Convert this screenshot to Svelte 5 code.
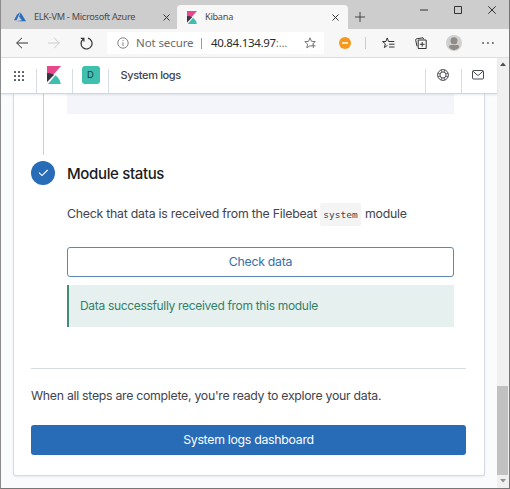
<script>
  const dots = [0, 1, 2, 3, 4, 5, 6, 7, 8];
</script>

{#snippet kibana(w, h)}
  <svg width={w} height={h} viewBox="0 0 14 18" preserveAspectRatio="none">
    <path d="M0 0H14L0 16Z" fill="#e8478b" />
    <path d="M0 7Q4 7 7.2 8.8L0 16Z" fill="#343741" />
    <path d="M1 18L8.4 9.2Q13 12.5 13.8 18Z" fill="#3ebeb0" />
  </svg>
{/snippet}

<div class="window">
  <div class="tabs">
    <div class="tab first">
      <svg class="azure" width="12" height="10" viewBox="0 0 12 10">
        <path d="M6.2 0L2.9 2.8L0 8.2H2.6Z" fill="#286dc0" />
        <path d="M6.6 .6L5.1 4.8L7.9 8.2L2.4 9.3H12Z" fill="#286dc0" />
      </svg>
      <span class="tabtitle">ELK-VM - Microsoft Azure</span>
      <svg class="close" width="7" height="7" viewBox="0 0 7 7"><path d="M.5 .5L6.5 6.5M6.5 .5L.5 6.5" /></svg>
    </div>
    <div class="tab active">
      {@render kibana(10, 13)}
      <span class="tabtitle">Kibana</span>
      <svg class="close" width="7" height="7" viewBox="0 0 7 7"><path d="M.5 .5L6.5 6.5M6.5 .5L.5 6.5" /></svg>
    </div>
    <svg class="plus" width="10" height="10" viewBox="0 0 10 10"><path d="M5 0V10M0 5H10" /></svg>
    <div class="controls">
      <svg width="8" height="10" viewBox="0 0 8 10"><path d="M0 5H8" /></svg>
      <svg width="8" height="10" viewBox="0 0 8 10"><path d="M.5 1.5H7.5V8.5H.5Z" /></svg>
      <svg width="8" height="10" viewBox="0 0 8 10"><path d="M.3 1.3L7.7 8.7M7.7 1.3L.3 8.7" /></svg>
    </div>
  </div>

  <div class="toolbar">
    <svg class="back" width="12" height="12" viewBox="0 0 12 12"><path d="M12 6H.7M6 .8L.7 6L6 11.2" /></svg>
    <svg class="forward" width="12" height="12" viewBox="0 0 12 12"><path d="M0 6H11.3M6 .8L11.3 6L6 11.2" /></svg>
    <svg class="reload" width="13" height="13" viewBox="0 0 13 13"><path d="M8 1.2A5.5 5.5 0 1 1 3.1 2.2M.8 1.3H3.9V4.4" /></svg>
    <div class="address">
      <svg class="info" width="12" height="12" viewBox="0 0 12 12"><circle cx="6" cy="6" r="5.2" /><path d="M6 5.2V9M6 3V4" /></svg>
      <span class="secure">Not secure</span>
      <i class="bar"></i>
      <span class="url">40.84.134.97<em>:...</em></span>
      <svg class="star" width="12" height="12" viewBox="0 0 12 12">
        <path d="M6 .8L7.5 4.3L11.3 4.6L8.4 7.1M7.1 9.3L6 8.7L2.8 10.8L3.6 7.1L.8 4.6L4.6 4.3L6 .8M7 8.8H11.5M9.3 6.6V11" />
      </svg>
    </div>
    <svg class="blocker" width="12" height="12" viewBox="0 0 12 12"><circle cx="6" cy="6" r="6" fill="#f7981d" /><path d="M3 6H9" stroke="#fff" stroke-width="1.5" /></svg>
    <i class="divider"></i>
    <svg class="favs" width="13" height="12" viewBox="0 0 13 12"><path d="M12.3 4.5H6.6L5.2 .9L3.9 4.5H.6L3.3 6.8L2.4 10.5L5.5 8.4M7 7.2H12.5M7 10H12.5" /></svg>
    <svg class="collections" width="12" height="13" viewBox="0 0 12 13"><path d="M3.2 3H11.2V11.5H3.2ZM7.2 5V9.7M4.8 7.3H9.6M2 9.3L.7 3.2Q.5 2 1.7 1.8L8 .8L8.8 2.2" /></svg>
    <svg class="avatar" width="16" height="16" viewBox="0 0 16 16">
      <circle cx="8" cy="8" r="8" fill="#d2d0ce" /><circle cx="8" cy="5.7" r="3.5" fill="#8e8b88" /><path d="M2.8 12Q3.2 10 5 10H11.4Q13.1 10 13.4 12Q11 15.3 8 15.3Q5 15.3 2.8 12Z" fill="#8e8b88" />
    </svg>
    <svg class="more" width="12" height="4" viewBox="0 0 12 4"><path d="M.3 2H1.8M5.2 2H6.7M10.1 2H11.6" /></svg>
  </div>

  <div class="page">
    <div class="view">
      <header>
        <div class="apps">{#each dots as dot (dot)}<i></i>{/each}</div>
        <div class="logo">{@render kibana(14, 18)}</div>
        <div class="space"><span>D</span></div>
        <div class="crumb">System logs</div>
        <div class="action">
          <svg width="12" height="12" viewBox="0 0 12 12"><circle cx="6" cy="6" r="5.4" /><circle cx="6" cy="6" r="3.1" /><path d="M4.2 .9L4.8 3M7.8 .9L7.2 3M4.2 11.1L4.8 9M7.8 11.1L7.2 9M.9 4.2L3 4.8M.9 7.8L3 7.2M11.1 4.2L9 4.8M11.1 7.8L9 7.2" stroke-width=".7" /></svg>
        </div>
        <div class="action mail">
          <svg width="12" height="10" viewBox="0 0 12 10"><rect x=".5" y=".5" width="11" height="8.5" rx="1" /><path d="M1 1.2L5.2 5Q6 5.6 6.8 5L11 1.2" /></svg>
        </div>
      </header>
      <main>
        <section class="panel">
          <div class="step">
            <div class="rail">
              <i></i>
              <span class="circle"><svg width="11" height="8" viewBox="0 0 11 8"><path d="M1 3.7L4 6.6L9.6 1" /></svg></span>
            </div>
            <div class="body">
              <div class="code"></div>
              <h2>Module status</h2>
              <p class="check"><span class="lead">Check that data is received from the Filebeat</span><code>system</code><span>module</span></p>
              <button class="outline">Check data</button>
              <div class="callout"><span>Data successfully received from this module</span></div>
            </div>
          </div>
          <hr />
          <p class="ready"><span>When all steps are complete, you're ready to explore your data.</span></p>
          <button class="fill">System logs dashboard</button>
        </section>
      </main>
    </div>
    <div class="scroll">
      <svg width="6" height="4" viewBox="0 0 6 4"><path d="M0 4L3 .5L6 4Z" fill="#505050" /></svg>
      <div class="track"><div class="thumb"></div></div>
      <svg width="6" height="4" viewBox="0 0 6 4"><path d="M0 0L3 3.5L6 0Z" fill="#909090" /></svg>
    </div>
  </div>
</div>

<style>
  * { box-sizing: border-box; }
  svg { display: block; flex: none; fill: none; }
  span { white-space: nowrap; }
  i { flex: none; }
  .window { width: 510px; height: 489px; display: flex; flex-direction: column; overflow: hidden; border-left: 1px solid #8c8c8c; border-right: 1px solid #777; border-bottom: 1px solid #777; background: #f7f7f7; font-family: Inter, "Liberation Sans", sans-serif; color: #41444e; }
  .tabs { height: 29px; flex: none; display: flex; background: #cdcdcd; }
  .tab { display: flex; align-items: center; margin-top: 5px; height: 24px; }
  .first { width: 176px; padding: 0 7px 0 13px; }
  .active { width: 171px; padding: 0 9px 0 10px; background: #f7f7f7; border-radius: 4px 4px 0 0; }
  .tabtitle { font: 9.2px/12px "Noto Sans", sans-serif; letter-spacing: -.28px; color: #4a4a4a; margin-left: 8px; }
  .close { margin-left: auto; stroke: #333; }
  .plus { margin: 12px 0 0 7px; stroke: #444; }
  .controls { display: flex; gap: 26px; margin: 5px 13px 0 auto; stroke: #333; }
  .toolbar { height: 29px; flex: none; display: flex; align-items: center; border-bottom: 1px solid #dedede; background: #f7f7f7; }
  .back { margin-left: 15px; stroke: #333; }
  .forward { margin-left: 20px; stroke: #ccc; }
  .reload { margin-left: 20px; stroke: #333; stroke-width: 1.2; }
  .address { width: 217px; height: 22px; margin-left: 14px; display: flex; align-items: center; background: #fff; border-radius: 2px; padding-left: 10px; }
  .info { stroke: #777; stroke-width: .9; }
  .secure, .url { font: 11.5px/16px "Noto Sans", sans-serif; color: #6b6b6b; }
  .secure { margin-left: 7px; width: 57px; letter-spacing: -.1px; }
  .bar { width: 1px; height: 11px; background: #999; margin-left: 8px; }
  .url { color: #2a2a2a; margin-left: 9px; width: 76px; letter-spacing: -.3px; }
  .url em { font-style: normal; color: #777; }
  .star { margin-left: 17px; stroke: #666; stroke-width: .9; }
  .blocker { margin-left: 15px; }
  .divider { width: 1px; height: 12px; margin-left: 14px; background: #ccc; }
  .favs { margin-left: 16px; stroke: #333; stroke-width: 1; }
  .collections { margin-left: 20px; stroke: #333; stroke-width: 1; }
  .avatar { margin-left: 19px; }
  .more { margin-left: 20px; stroke: #333; stroke-width: 1.3; }
  .page { flex: 1; min-height: 0; display: flex; }
  .view { flex: 1; min-width: 0; display: flex; flex-direction: column; background: #fafbfd; }
  header { height: 36px; flex: none; display: flex; align-items: stretch; background: #fff; border-bottom: 1px solid #d0d5df; box-shadow: 0 1px 2px #98a2b340; z-index: 1; }
  .apps { width: 35px; display: grid; grid-template-columns: repeat(3, 2px); grid-auto-rows: 2px; gap: 2px; place-content: center; }
  .apps i { background: #555b66; border-radius: .5px; }
  .logo, .space, .action { width: 36px; display: flex; justify-content: center; align-items: center; border-left: 1px solid #d8dce5; margin-top: 11px; padding-bottom: 12px; }
  .logo { padding-right: 1px; }
  .space span { width: 18px; height: 18px; border-radius: 3px; background: #3fbfad; font-size: 9.5px; line-height: 18px; text-align: center; color: #1f3b3b; }
  .crumb { border-left: 1px solid #d8dce5; padding-left: 11.5px; margin-top: 11px; font-size: 11px; line-height: 13px; letter-spacing: -.36px; font-weight: 500; flex: 1; white-space: nowrap; }
  .action { padding-right: 2px; }
  .mail { padding-right: 3px; }
  .action svg { stroke: #343741; stroke-width: .9; }
  main { flex: 1; min-height: 0; display: flex; padding: 0 12px 12px; }
  .panel { flex: 1; display: flex; flex-direction: column; background: #fff; border: 1px solid #d6dbe4; border-top: 0; border-radius: 0 0 3px 3px; box-shadow: 0 1px 2px #98a2b333; padding: 0 18px 20px 17px; }
  .step { display: flex; height: 274px; }
  .rail { width: 24px; display: flex; flex-direction: column; align-items: center; margin-right: 12px; }
  .rail i { width: 1px; height: 61px; background: #cbcfd7; margin-bottom: 6px; }
  .circle { width: 24px; height: 24px; border-radius: 50%; background: #286bb6; display: flex; align-items: center; justify-content: center; }
  .circle svg { stroke: #fff; stroke-width: 1.1; }
  .body { flex: 1; display: flex; flex-direction: column; padding-right: 12px; }
  .code { height: 20px; background: #f4f5fb; flex: none; }
  h2, p { margin: 0; }
  h2 { margin-top: 49px; height: 22px; font-size: 15px; line-height: 22px; letter-spacing: -.35px; font-weight: 450; color: #1a1c21; }
  .check { display: flex; align-items: center; height: 24px; margin-top: 17px; font-size: 12.3px; letter-spacing: -.23px; }
  .check span { padding-bottom: 1px; }
  .check .lead { width: 250px; }
  code { background: #f4f4f5; width: 41px; height: 23px; margin: 0 4px 0 3px; border-radius: 2px; text-align: center; font: 9.5px/23px "DejaVu Sans Mono", monospace; letter-spacing: 0; }
  button { font-family: inherit; font-size: 12.3px; letter-spacing: -.28px; height: 30px; padding: 0 0 1px; border-radius: 3px; }
  .outline { flex: none; margin-top: 21px; background: #fff; border: 1px solid #5d88b5; color: #356fae; }
  .callout { height: 42px; flex: none; margin-top: 8px; background: #e6f1ef; border-left: 2px solid #3f8b73; color: #33806a; font-size: 12px; line-height: 42px; letter-spacing: -.32px; padding-left: 11px; }
  hr { width: 100%; height: 1px; flex: none; border: 0; background: #d8dbe2; margin: 0; }
  .ready { height: 20px; margin-top: 17px; font-size: 12.3px; line-height: 20px; letter-spacing: -.28px; }
  .fill { margin-top: 19px; flex: none; border: 0; background: #286bb6; color: #fff; }
  .scroll { width: 12px; flex: none; display: flex; flex-direction: column; align-items: center; background: #f0f0f0; padding: 4px 0 5px; }
  .track { flex: 1; align-self: stretch; display: flex; align-items: flex-end; margin: 0 0 4px; }
  .thumb { width: 11px; height: 89px; background: #c1c1c1; }
</style>
